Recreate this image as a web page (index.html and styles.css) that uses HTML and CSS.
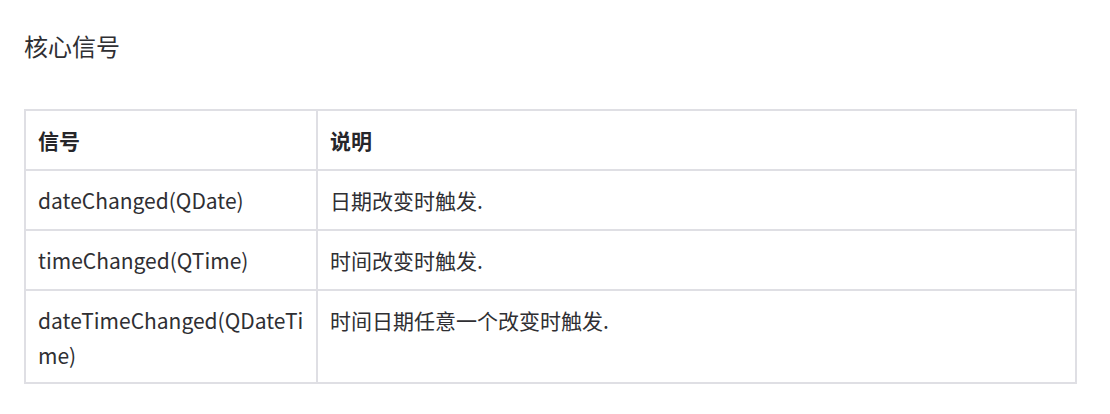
FILE: index.html
```html
<!DOCTYPE html>
<html lang="zh-CN">
<head>
<meta charset="utf-8">
<title>核心信号</title>
<link rel="stylesheet" href="styles.css">
</head>
<body>
<div class="page">
  <h3 class="title">核心信号</h3>
  <table class="sig-table">
    <colgroup>
      <col class="col-sig">
      <col class="col-desc">
    </colgroup>
    <thead>
      <tr><th>信号</th><th>说明</th></tr>
    </thead>
    <tbody>
      <tr><td>dateChanged(QDate)</td><td>日期改变时触发.</td></tr>
      <tr><td>timeChanged(QTime)</td><td>时间改变时触发.</td></tr>
      <tr><td>dateTimeChanged(QDateTime)</td><td>时间日期任意一个改变时触发.</td></tr>
    </tbody>
  </table>
</div>
</body>
</html>
```

FILE: styles.css
```css
* { box-sizing: border-box; }
html, body { margin: 0; padding: 0; background: #fff; }
body {
  font-family: "Noto Sans CJK SC", "Noto Sans", sans-serif;
  color: #2f2f33;
}
.page {
  padding: 28px 33px 0 24px;
}
.title {
  margin: 0 0 45px 0;
  font-size: 24px;
  font-weight: 400;
  line-height: 36px;
  color: #2f2f33;
}
.sig-table {
  width: 1053px;
  border-collapse: collapse;
  table-layout: fixed;
  font-size: 21px;
  line-height: 35px;
}
.col-sig { width: 292px; }
.sig-table th, .sig-table td {
  border: 2px solid #dfdfe4;
  padding: 12px 12px 11px 12px;
  text-align: left;
  vertical-align: top;
  word-break: break-all;
}
.sig-table tbody tr:last-child td {
  padding-bottom: 9px;
}
.sig-table th {
  font-weight: 700;
  color: #26262a;
}
```
